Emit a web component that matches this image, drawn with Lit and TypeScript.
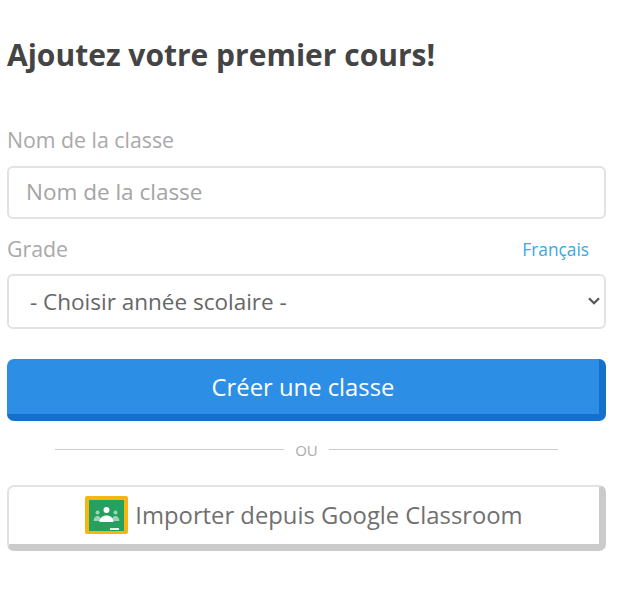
import { LitElement, html, css } from "lit";
import { customElement } from "lit/decorators.js";

@customElement("app-root")
export class AppRoot extends LitElement {
  static styles = css`
    :host { display: block; width: 632px; height: 591px; overflow: hidden; background: #fff; font-family: "Open Sans", sans-serif; }
    .page { width: 600px; padding: 34px 0 0 7px; display: flex; flex-direction: column; }
    h1 { margin: 0; font-size: 30px; line-height: 41px; font-weight: 700; color: #444; }
    .label { font-size: 21.3px; line-height: 28px; color: #a9a9a9; }
    .first { margin-top: 51px; }
    .row { display: flex; justify-content: space-between; align-items: center; margin-top: 16px; width: 599px; }
    .lang { font-size: 17.3px; color: #3ba7e0; margin-right: 17px; }
    .field { box-sizing: border-box; width: 599px; border: 2px solid #e2e2e2; border-radius: 6px; background: #fff; font-family: inherit; font-size: 22.5px; outline: none; }
    .text { height: 53px; margin-top: 12px; padding: 0 17px 2px; color: #555; }
    .text::placeholder { color: #a4a4a4; opacity: 1; }
    .select-wrap { position: relative; margin-top: 11px; width: 599px; }
    .select { display: block; height: 55px; padding: 0 40px 0 21px; color: #666; appearance: none; -webkit-appearance: none; }
    .chevron { position: absolute; right: 6px; top: 23px; pointer-events: none; }
    .btn { box-sizing: border-box; width: 599px; border-radius: 7px; font-family: inherit; font-size: 23.8px; display: flex; align-items: center; justify-content: center; padding: 0; }
    .primary { height: 62px; margin-top: 30px; border: solid #1570cd; border-width: 0 7px 7px 0; background: #2d8ee6; color: #fff; }
    .or { display: flex; align-items: center; gap: 11px; margin: 18px 49px 0 48px; height: 20px; font-size: 15px; color: #aaa; }
    .or i { flex: 1; height: 1px; background: #ccc; }
    .or span { padding-top: 2px; }
    .secondary { height: 66px; margin-top: 26px; padding-bottom: 1px; border: solid #cbcbcb; border-width: 2px 7px 7px 2px; border-top-color: #e2e2e2; border-left-color: #e2e2e2; background: #fff; color: #707070; gap: 7px; }
    svg { display: block; flex: none; }
  `;

  render() {
    return html`<div class="page">
      <h1>Ajoutez votre premier cours!</h1>
      <div class="label first">Nom de la classe</div>
      <input class="field text" placeholder="Nom de la classe" />
      <div class="row"><span class="label">Grade</span><span class="lang">Français</span></div>
      <div class="select-wrap">
        <select class="field select"><option>- Choisir année scolaire -</option></select>
        <svg class="chevron" width="12" height="8" viewBox="0 0 12 8"><path d="M1 1.200l5 5 5-5" fill="none" stroke="#555" stroke-width="2.200"/></svg>
      </div>
      <button class="btn primary">Créer une classe</button>
      <div class="or"><i></i><span>OU</span><i></i></div>
      <button class="btn secondary">
        <svg width="43" height="38" viewBox="0 0 43 38">
          <rect width="43" height="38" rx="2" fill="#f7b512"/>
          <rect x="4" y="4" width="35" height="31" fill="#25a05f"/>
          <rect x="25" y="32" width="9" height="2" fill="#e8f2e8"/>
          <g fill="#fff" fill-opacity=".55">
            <circle cx="12.500" cy="16.500" r="2"/>
            <circle cx="30.500" cy="16.500" r="2"/>
            <path d="M8.500 25c0-3 2-5 4-5s4 2 4 5z"/>
            <path d="M26.500 25c0-3 2-5 4-5s4 2 4 5z"/>
          </g>
          <circle cx="21.500" cy="14" r="3" fill="#fff"/>
          <path d="M14.500 26c0-4 3-6.500 7-6.500s7 2.500 7 6.500z" fill="#fff"/>
        </svg>
        <span>Importer depuis Google Classroom</span>
      </button>
    </div>`;
  }
}
